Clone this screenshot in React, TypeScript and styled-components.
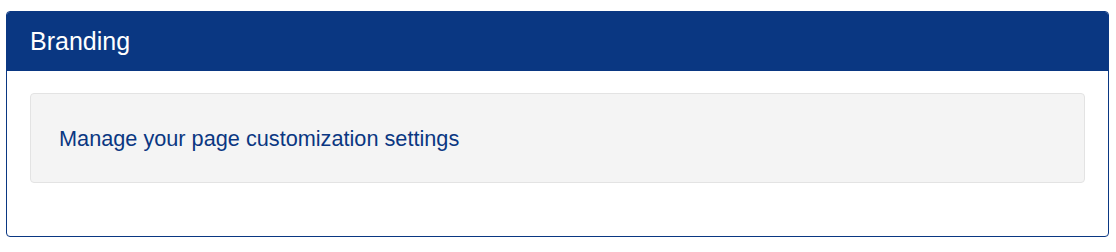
import React from "react";
import styled, { createGlobalStyle } from "styled-components";

const Global = createGlobalStyle`
  html, body { margin: 0; padding: 0; background: #ffffff; }
  body { font-family: Arial, "Liberation Sans", Helvetica, sans-serif; }
`;

const Page = styled.div`
  padding: 11px 7px 0 6px;
`;

const Panel = styled.section`
  border: 1px solid #0a3782;
  border-radius: 4px;
  overflow: hidden;
  background: #ffffff;
`;

const Header = styled.header`
  background: #0a3782;
  color: #ffffff;
  height: 59px;
  display: flex;
  align-items: center;
  padding: 0 23px;
  font-size: 25px;
  line-height: 1;
`;

const Body = styled.div`
  padding: 22px 23px 53px;
`;

const Well = styled.div`
  background: #f4f4f4;
  border: 1px solid #e3e3e3;
  border-radius: 4px;
  height: 88px;
  display: flex;
  align-items: center;
  padding: 2px 28px 0;
  box-sizing: border-box;
  height: 90px;
`;

const Lead = styled.p`
  margin: 0;
  color: #0a3782;
  font-size: 21.7px;
  line-height: 1;
`;

export default function App() {
  return (
    <>
      <Global />
      <Page>
        <Panel>
          <Header>Branding</Header>
          <Body>
            <Well>
              <Lead>Manage your page customization settings</Lead>
            </Well>
          </Body>
        </Panel>
      </Page>
    </>
  );
}
